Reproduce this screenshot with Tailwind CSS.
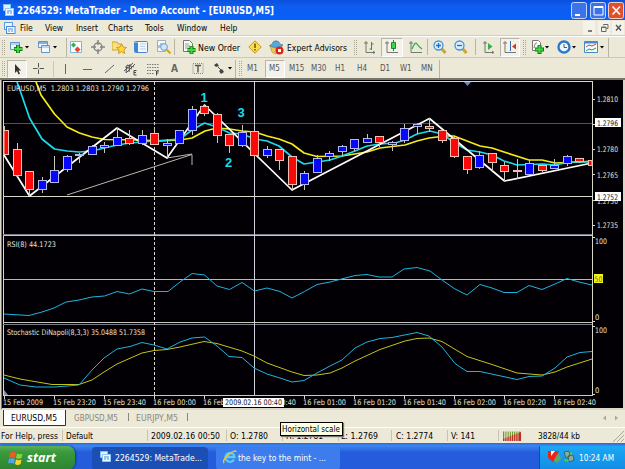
<!DOCTYPE html>
<html lang="en">
<head>
    <meta charset="UTF-8">
    <meta name="viewport" content="width=device-width, initial-scale=1.0">
    <title>MetaTrader</title>
    <script src="https://cdn.jsdelivr.net/npm/@tailwindcss/browser@4"></script>
</head>
<body class="w-[625px] h-[469px] overflow-hidden bg-[#ece9d8] font-['DejaVu_Sans_Condensed','DejaVu_Sans',sans-serif] text-[8px] leading-none text-black whitespace-nowrap">
<div class="flex flex-col w-[625px] h-[469px] overflow-hidden">

    <!-- Title bar -->
    <header class="flex items-center h-5 shrink-0 bg-linear-to-b from-[#0a50dc] via-[#0f5cf0] via-30% to-[#0560f8] text-white">
        <svg class="ml-[3px] w-[11px] h-[12px]" viewBox="0 0 11 12"><rect x=".5" y=".5" width="7" height="6" fill="#dff3ff" stroke="#7fc0f0"/><rect x="2.5" y="4.500" width="8" height="7" fill="#f4fbff" stroke="#8cc8f4"/><path d="M4 7h5M4 9h2M7 9h2" stroke="#3a8cd8"/></svg>
        <svg class="ml-[3px]" width="264" height="20"><text x="0" y="14" font-size="10" font-weight="bold" fill="#fff" textLength="257" lengthAdjust="spacingAndGlyphs">2264529: MetaTrader - Demo Account - [EURUSD,M5]</text></svg>
        <div class="ml-auto mr-[1px] flex gap-[2.5px]">
            <svg width="16" height="17"><rect x=".5" y=".5" width="15" height="16" rx="2" fill="#3c72ea" stroke="#c4d6fb"/><path d="M4 13h5" stroke="#fff" stroke-width="2"/></svg>
            <svg width="16" height="17"><rect x=".5" y=".5" width="15" height="16" rx="2" fill="#3c72ea" stroke="#c4d6fb"/><path d="M4 4.500h9v8.500H4zM4 5.500h9" fill="none" stroke="#fff"/></svg>
            <svg width="16" height="17"><rect x=".5" y=".5" width="15" height="16" rx="2" fill="#e0502c" stroke="#f4d0c4"/><path d="M4.500 4.500l7.500 8M12 4.500l-7.500 8" stroke="#fff" stroke-width="1.700"/></svg>
        </div>
    </header>

    <!-- Menu -->
    <nav class="flex items-center h-4 shrink-0 text-[8.500px] pt-px border-b border-[#d2cfbe]">
        <svg class="ml-1 w-[12px] h-[12px]" viewBox="0 0 12 12"><rect x=".5" y=".5" width="8" height="7" fill="#eaf5ff" stroke="#5b9ae0"/><rect x="2.500" y="4.500" width="8.500" height="7" fill="#f4fbff" stroke="#4a8ad8"/><path d="M4 7h5M4 9h2M7 9h2" stroke="#4a8ad8"/></svg>
        <span class="ml-1 w-[25px]">File</span>
        <span class="w-[31px]">View</span>
        <span class="w-[32px]">Insert</span>
        <span class="w-[37px]">Charts</span>
        <span class="w-[32px]">Tools</span>
        <span class="w-[43px]">Window</span>
        <span>Help</span>
        <svg class="ml-auto mr-[1px]" width="41" height="14"><path d="M0 0h12v14H0zM15 0h12v14H15zM29 0h12v14H29z" fill="#f5f3e9"/><path d="M5 10h4" stroke="#555" stroke-width="1.500"/><path d="M20.500 4.500V3.500h4.500v4h-1.500M18.500 6h4.500v4.500h-4.500zM18.500 6.500H23" fill="none" stroke="#666"/><path d="M33 4l5 5.500M38 4l-5 5.500" stroke="#555" stroke-width="1.400"/></svg>
    </nav>

    <!-- Standard toolbar -->
    <section class="flex items-center h-[22px] shrink-0 border-t border-white border-b border-b-[#cbc8b8] text-[8.500px]">
        <div class="ml-[2px] w-[3px] h-[15px] border-l border-r border-dotted border-[#aaa797]"></div>
        <svg class="ml-1" width="20" height="14"><path d="M1.500 2.500h9v7h-9z" fill="#eef6ff" stroke="#5f94cc"/><path d="M2 4h8" stroke="#7fb0e0"/><path d="M9 5v8M5 9h8.500" stroke="#167a1c" stroke-width="4"/><path d="M9 5.500v7M5.500 9H13" stroke="#3ddb3c" stroke-width="2"/><path d="M16 6h4l-2 2.500z"/></svg>
        <svg class="ml-[8px]" width="20" height="14"><path d="M1.500 1.500h9v6h-9z" fill="#eef6ff" stroke="#5f94cc"/><path d="M2 3h8" stroke="#7fb0e0" stroke-width="2"/><path d="M4.500 5.500h8v7h-8z" fill="#f5faff" stroke="#5f94cc"/><path d="M5 7h8" stroke="#7fb0e0"/><path d="M16 6h4l-2 2.500z"/></svg>
        <div class="ml-[9px] flex h-[19px] w-[19px] items-center justify-center border-l border-[#b8b5a5]"><svg width="14" height="14"><path d="M1.500 1.500h11v11h-11z" fill="#fff" stroke="#7fb4dc"/><path d="M4.500 2.500l2.500 2.500-2.500 2.500L2 5z" fill="#2bb34b"/><path d="M8.500 6.500l3 3-3 3-3-3z" fill="#e8452c"/></svg></div>
        <svg class="ml-[6px]" width="14" height="14"><circle cx="7" cy="7" r="4" fill="none" stroke="#858585" stroke-width="1.500"/><path d="M7 0v5M7 9v5M0 7h5M9 7h5" stroke="#858585" stroke-width="1.500"/></svg>
        <svg class="ml-[7px]" width="15" height="14"><path d="M0 2h5l1 2h4v6H0z" fill="#f8e27b" stroke="#c9a43a"/><path d="M9.500 4l1.600 3 3.400.5-2.500 2.300.7 3.700-3.200-1.800-3 1.800.6-3.700L4.500 7.500 8 7z" fill="#ffd83c" stroke="#d88e1c" stroke-width=".9"/></svg>
        <svg class="ml-[7px]" width="14" height="14"><rect x=".5" y="1.500" width="13" height="11" rx="1" fill="#f2f8ff" stroke="#4688cc"/><path d="M1 2.500h3v9.500H1z" fill="#3e86d4"/><path d="M6 4h6M6 6.500h5M6 9h6" stroke="#b9cfe8"/></svg>
        <svg class="ml-[8px]" width="15" height="14"><path d="M1.500.5h8v11h-8z" fill="#f6f8fa" stroke="#9bb0c4"/><path d="M3 8V5M5 7V3M7 6V3" stroke="#668cae"/><circle cx="8" cy="7" r="3.400" fill="#cde6f8" stroke="#6f9fc8"/><path d="M10.500 9.500l4 4" stroke="#d9a020" stroke-width="2"/></svg>
        <div class="ml-[3px] w-px h-4 bg-[#b8b5a5]"></div>
        <svg class="ml-[7px]" width="15" height="15"><path d="M1.500.5h6l3 3v8h-9z" fill="#fbfbf7" stroke="#777"/><path d="M3 4h4M3 6h5M3 8h4" stroke="#999"/><path d="M9.500 6v8M5.500 10h8" stroke="#167a1c" stroke-width="4"/><path d="M9.500 6.500v7M6 10h7" stroke="#3ddb3c" stroke-width="2"/></svg>
        <svg width="45" height="14"><text x="1" y="10.500" font-size="9" textLength="42" lengthAdjust="spacingAndGlyphs">New Order</text></svg>
        <svg class="ml-[6px]" width="14" height="14"><path d="M7 .8L13.200 7 7 13.200.8 7z" fill="#ffdc48" stroke="#c29a22"/><path d="M7 3.500v4.500M7 9v1.500" stroke="#6a5212" stroke-width="1.500"/></svg>
        <svg class="ml-[7px]" width="15" height="15"><path d="M1 6q6 4 12 0l-2 6-5 2-3-2z" fill="#efc758" stroke="#b98f2c" stroke-width=".7"/><path d="M.5 5.500Q4 4.500 4 2q3-2.500 6 0 0 2.500 4 3-6 4.500-13.500.5z" fill="#58a8dc" stroke="#327cae" stroke-width=".7"/><circle cx="10.500" cy="10.500" r="4" fill="#dc2418"/><path d="M9 9h3v3H9z" fill="#fff"/></svg>
        <svg class="ml-[2px]" width="65" height="14"><text x="1" y="10.500" font-size="9" textLength="60" lengthAdjust="spacingAndGlyphs">Expert Advisors</text></svg>
        <div class="ml-[3px] w-[3px] h-[15px] border-l border-r border-dotted border-[#aaa797]"></div>
        <svg class="ml-[7px]" width="12" height="14"><path d="M2 1v11.500H11M0 3h4M9 11l2 1.500-2 1" fill="none" stroke="#777"/><path d="M7.500 2v8M5.500 9h2M7.500 4h2" stroke="#2a9a3a" fill="none"/></svg>
        <div class="ml-[5px] flex h-[19px] w-[22px] items-center justify-center border border-[#b8b5a5] border-r-white border-b-white bg-[#f4f2e8]"><svg width="14" height="14"><path d="M2 1v11.500H13M0 3h4" fill="none" stroke="#777"/><path d="M8.500 0v11" stroke="#148a28"/><path d="M6.500 2.500h4v6h-4z" fill="#36d84c" stroke="#148a28"/></svg></div>
        <svg class="ml-[6px]" width="14" height="14"><path d="M2 1v11.500H13M0 3h4" fill="none" stroke="#777"/><path d="M3 9Q6 1 8 4t5 5" fill="none" stroke="#35ab48" stroke-width="1.300"/></svg>
        <div class="ml-[4px] w-px h-4 bg-[#b8b5a5]"></div>
        <svg class="ml-[5px]" width="15" height="15"><path d="M8 8l4.500 5" stroke="#d2a42c" stroke-width="3"/><circle cx="5.500" cy="5.500" r="4.500" fill="#d9efff" stroke="#4a94d4" stroke-width="1.300"/><path d="M3 5.500h5M5.500 3v5" stroke="#2a6cb4" stroke-width="1.300"/></svg>
        <svg class="ml-[6px]" width="15" height="15"><path d="M8 8l4.500 5" stroke="#d2a42c" stroke-width="3"/><circle cx="5.500" cy="5.500" r="4.500" fill="#d9efff" stroke="#4a94d4" stroke-width="1.300"/><path d="M3 5.500h5" stroke="#2a6cb4" stroke-width="1.300"/></svg>
        <div class="ml-[6px] w-px h-4 bg-[#b8b5a5]"></div>
        <svg class="ml-[7px]" width="12" height="14"><path d="M2 1v11.500H11M0 3h4M9 11l2 1.500-2 1" fill="none" stroke="#777"/><path d="M5 3l4.500 3.500L5 10z" fill="#32b148"/></svg>
        <div class="ml-[5px] flex h-[19px] w-[20px] items-center justify-center border border-[#b8b5a5] border-r-white border-b-white bg-[#f4f2e8]"><svg width="14" height="14"><path d="M2 1v11.500H13M0 3h4" fill="none" stroke="#777"/><path d="M7.500 1v10" stroke="#346cb4"/><path d="M13 3.500L9 6.500l4 3z" fill="#d83624"/></svg></div>
        <div class="ml-[3px] w-[3px] h-[15px] border-l border-r border-dotted border-[#aaa797]"></div>
        <svg class="ml-[4px]" width="20" height="14"><path d="M2.500.5h6l2 2v8h-8z" fill="#fbfbf7" stroke="#777"/><path d="M4 8q1-6 3-5" fill="none" stroke="#777"/><path d="M9.500 5v9M5 9.500h9" stroke="#167a1c" stroke-width="4"/><path d="M9.500 5.500V13M5.500 9.500H13" stroke="#3ddb3c" stroke-width="2"/><path d="M15 6h4l-2 2.500z"/></svg>
        <svg class="ml-[7px]" width="20" height="14"><circle cx="7" cy="7" r="5.500" fill="#f0f8ff" stroke="#2e78cc" stroke-width="2.400"/><path d="M7 4v3.500h3" fill="none" stroke="#555"/><path d="M15 6h4l-2 2.500z"/></svg>
        <svg class="ml-[7px]" width="20" height="14"><path d="M.5 1.500h13v11H.5z" fill="#f5faff" stroke="#4a88cc"/><path d="M1 2.500h12" stroke="#4a88cc" stroke-width="2"/><path d="M2 7l3-2 3 1 4-2" fill="none" stroke="#b44"/><path d="M2 11l3-2 3 1 4-2" fill="none" stroke="#2a9a3a"/><path d="M16 6h4l-2 2.500z"/></svg>
        <div class="ml-[4px] w-px h-[19px] bg-[#b8b5a5]"></div>
    </section>

    <!-- Line studies and periods -->
    <section class="flex items-center h-5 shrink-0 pt-px text-[#555]">
        <div class="ml-[2px] w-[3px] h-[15px] border-l border-r border-dotted border-[#aaa797]"></div>
        <div class="ml-[2px] flex h-[18px] w-[20px] items-center justify-center border border-[#b8b5a5] border-r-white border-b-white bg-[#f4f2e8]"><svg width="9" height="12"><path d="M2 1v9l2-2 1.500 3.500 1.500-.7L5.500 7.500H8z" fill="#333"/></svg></div>
        <svg class="ml-[5px]" width="13" height="13"><path d="M6.500 1v4.500M6.500 7.500V12M1 6.500h4.500M7.500 6.500H12" stroke="#555"/></svg>
        <div class="ml-[8px] w-px h-4 bg-[#cbc8b8]"></div>
        <svg class="ml-[10px]" width="3" height="12"><path d="M1.500 1v10" stroke="#666"/></svg>
        <svg class="ml-[15px]" width="12" height="12"><path d="M1 6.500h9" stroke="#666"/></svg>
        <svg class="ml-[10px]" width="12" height="12"><path d="M1 10l9-8" stroke="#666"/></svg>
        <svg class="ml-[8px]" width="14" height="14"><path d="M0 9L9 1M2 11l9-9M1 5l7 2M3 3l7 2M2 11l1-8M5 10l1-8" stroke="#555" fill="none"/><path d="M12.500 8.500H10v4.500h2.500M10 10.500h2" stroke="#444" fill="none"/></svg>
        <svg class="ml-[9px]" width="14" height="14"><path d="M0 2.500h12M0 5.500h12M0 8.500h12M0 11.500h7" stroke="#777" stroke-dasharray="1.500 1"/><path d="M9.500 13.500v-4.500H12M9.500 11h2" stroke="#444" fill="none"/></svg>
        <span class="ml-[10px] w-[18px] text-[10px] font-bold text-[#666]">A</span>
        <svg class="ml-[3px]" width="12" height="13"><path d="M1 1.500h10v10H1z" fill="none" stroke="#888" stroke-dasharray="1 1"/><path d="M3 3.500h6M6 3.500v7" stroke="#555" stroke-width="1.400"/></svg>
        <svg class="ml-[9px]" width="20" height="13"><path d="M1 3l3-2 2 3-3 1zM6 9l3-2 2 3-3 2z" fill="#444"/><path d="M5 5l3 3" stroke="#444"/><path d="M15 5h4l-2 2.500z" fill="#000"/></svg>
        <div class="ml-[2px] w-px h-[18px] bg-[#b8b5a5]"></div>
        <div class="ml-[3px] w-[3px] h-[15px] border-l border-r border-dotted border-[#aaa797]"></div>
        <span class="ml-[5px] w-[18px]">M1</span>
        <span class="w-[20px] h-[18px] pl-[3px] pt-[4px] border border-[#b8b5a5] border-r-white border-b-white bg-[#f4f2e8]">M5</span>
        <span class="ml-[4px] w-[22px]">M15</span>
        <span class="w-[24px]">M30</span>
        <span class="w-[22px]">H1</span>
        <span class="w-[23px]">H4</span>
        <span class="w-[20px]">D1</span>
        <span class="w-[21px]">W1</span>
        <span class="w-[18px]">MN</span>
        <div class="w-px h-[18px] bg-[#b8b5a5]"></div>
    </section>

    <!-- Chart window -->
    <main class="h-[332px] shrink-0">
        <svg id="chart" class="block" width="625" height="332" viewBox="0 78 625 332" font-size="7.600">
            <rect x="0" y="78" width="625" height="332" fill="#dbd8c8"/>
            <path d="M0 79h625" stroke="#77776c" stroke-width="2"/>
            <path d="M1.500 80v329" stroke="#77776c"/>
            <rect x="2" y="80" width="621" height="328" fill="#020004"/>
            <g fill="none" shape-rendering="crispEdges">
                <path d="M3.500 395.500V81.500H592.500V395.500" stroke="#d8d8c8"/>
                <path d="M4 123.500H592" stroke="#55554f"/>
                <path d="M3 196.500H592" stroke="#d8d8c8"/>
                <path d="M3 235.500H592M3 322.500H592M3 395.500H593" stroke="#c9c9bd"/>
                <path d="M3 234.500H592M3 324.500H592" stroke="#77808c"/>
                <path d="M4 279.500H592" stroke="#cccc10"/>
                <path d="M154.500 82V395" stroke="#d8d8d0" stroke-dasharray="3 2"/>
                <path d="M254.500 82V395" stroke="#d0d0dc"/>
                <path d="M592 99.500h3M592 124.500h3M592 149.500h3M592 174.500h3M592 200.500h3M592 225.500h3M592 237.500h3M592 321.500h3M592 326.500h3M592 394.500h3" stroke="#d8d8c8"/>
                <path d="M4.500 396v3M54.500 396v3M104.500 396v3M154.500 396v3M204.500 396v3M304.500 396v3M354.500 396v3M404.500 396v3M454.500 396v3M504.500 396v3M554.500 396v3" stroke="#d8d8c8"/>
            </g>
            <path d="M464 82h7l-3.500 4z" fill="#6a88b0"/>
            <path d="M4 390l4 5H4z" fill="#8494a8"/>
            <g fill="none" stroke="#b8b8ac">
                <path d="M67 195L192 154.500V165M167 158L192 154"/>
            </g>
            <g fill="none" stroke-width="1.700" stroke-linejoin="round">
                <path stroke="#f4ec18" d="M36 82L41 95 54.500 114 67 127 79.500 133 92 137 104.500 139.500 142 140 160 141 180 140 192 138 205 131 217 128 229.500 129 242 131 255 132 267 136 279 139 292 144 304 153 317 156.500 342 156 367 152 380 148 405 145 417 141 429 138 445 136 454 136 467 141 480 146 492 148 504 152 529 160 542 160 555 163 580 162 592 161"/>
                <path stroke="#18dcec" d="M17 82L22 96 29.500 118 42 139 54.500 149 67 151 79.500 152 92 151 104.500 148 117 145 130 143 154 141 167 140 180 139 192 130 204.500 123 217 127 229.500 133 242 134 255 139 267 141 279 146 292 157 304 164 317 162 330 160 342 156 355 151 367 146 380 144 395 143 405 140 417 134 430 131 442 134 455 143 467 150 480 152 492 155 504 161 517 165 542 164 555 165 570 162 592 162"/>
                <path stroke="#fff" d="M4 155L29.500 196 117 128 167 158 204.500 105 292 190 429.500 118.500 504.500 181 592 163"/>
            </g>
            <g id="candles"></g>
            <g fill="none" stroke="#1fb4dc">
                <path d="M4 314L29 315.500 42 312 54 308 66 302 79 300 92 297 104.500 296 117 291.500 129.500 294 142 289 154 291.500 168 291.500 180 282 192 273.500 204.500 275 217 286 229.500 289.500 242 282.500 254.500 291 267 288 280 291.500 292 298 304.500 291.500 317 284.500 330 282 355 275.500 367 274.500 379 277 392 277 404 269 417 267.500 430 271 442 280 455 289 467 295 480 284.500 492 288 504 292.500 517 292.500 529 285.500 542 289.500 555 284 567 278.500 579 282 592 285"/>
                <path stroke="#c4c418" d="M4 375L20 379 52 384.500 79 384.500 92 380 104 372 117 364 142 353 154 350.500 167 349.500 180 347 204 341.500 217 343.500 242 351 254 356 267 363 292 372 304 375.500 317 375 330 373 342 368 355 361 380 349.500 405 341 417 338.500 429 338 442 341.500 467 356.500 492 364.500 517 373 542 375 555 372 567 367 592 359"/>
                <path d="M4 378L20 385 36 387 55 387 79 385 92 370 104 358 117 349 130 346.500 142 342.500 154 345 167 349 180 342 192 338 204.500 337 217 346 229 356.500 242 357.500 254 368 267 374 280 378 292 382 304 380.500 317 373 330 366 342 360 355 348 367 342 380 338.500 392 337.500 417 332.500 429 336 442 347 455 363.500 467 371.500 480 371.500 517 379.500 529 376.500 542 376 555 368 567 357 580 352.500 592 351.500"/>
            </g>
            <g fill="#18dcec" font-family="Liberation Sans" font-size="13" font-weight="bold">
                <text x="200.500" y="102">1</text>
                <text x="225" y="167">2</text>
                <text x="237.500" y="117">3</text>
            </g>
            <g fill="#e4e4dc">
                <text x="7" y="91" textLength="142" lengthAdjust="spacingAndGlyphs" xml:space="preserve">EURUSD,M5  1.2803 1.2803 1.2790 1.2796</text>
                <text x="7" y="246.500" textLength="49" lengthAdjust="spacingAndGlyphs">RSI(8) 44.1723</text>
                <text x="7" y="334.500" textLength="138" lengthAdjust="spacingAndGlyphs">Stochastic DiNapoli(8,3,3) 35.0488 51.7358</text>
                <text x="597" y="102" textLength="21" lengthAdjust="spacingAndGlyphs">1.2810</text>
                <text x="597" y="152" textLength="21" lengthAdjust="spacingAndGlyphs">1.2780</text>
                <text x="597" y="177.500" textLength="21" lengthAdjust="spacingAndGlyphs">1.2765</text>
                <text x="597" y="203.500" textLength="21" lengthAdjust="spacingAndGlyphs">1.2750</text>
                <text x="597" y="228" textLength="21" lengthAdjust="spacingAndGlyphs">1.2735</text>
                <text x="595" y="244" textLength="12" lengthAdjust="spacingAndGlyphs">100</text>
                <text x="595" y="320">0</text>
                <text x="595" y="332.500" textLength="12" lengthAdjust="spacingAndGlyphs">100</text>
                <text x="595" y="392.500">0</text>
                <text x="3" y="404.500" textLength="40" lengthAdjust="spacingAndGlyphs">15 Feb 2009</text>
                <text x="53" y="404.500" textLength="43" lengthAdjust="spacingAndGlyphs">15 Feb 23:20</text>
                <text x="103" y="404.500" textLength="43" lengthAdjust="spacingAndGlyphs">15 Feb 23:40</text>
                <text x="153" y="404.500" textLength="43" lengthAdjust="spacingAndGlyphs">16 Feb 00:00</text>
                <text x="203" y="404.500" textLength="43" lengthAdjust="spacingAndGlyphs">16 Feb 00:20</text>
                <text x="253" y="404.500" textLength="43" lengthAdjust="spacingAndGlyphs">16 Feb 00:40</text>
                <text x="303" y="404.500" textLength="43" lengthAdjust="spacingAndGlyphs">16 Feb 01:00</text>
                <text x="353" y="404.500" textLength="43" lengthAdjust="spacingAndGlyphs">16 Feb 01:20</text>
                <text x="403" y="404.500" textLength="43" lengthAdjust="spacingAndGlyphs">16 Feb 01:40</text>
                <text x="453" y="404.500" textLength="43" lengthAdjust="spacingAndGlyphs">16 Feb 02:00</text>
                <text x="503" y="404.500" textLength="43" lengthAdjust="spacingAndGlyphs">16 Feb 02:20</text>
                <text x="553" y="404.500" textLength="43" lengthAdjust="spacingAndGlyphs">16 Feb 02:40</text>
            </g>
            <!-- Price, level and time markers -->
            <path d="M595 118h26v9h-26zM595 192h26v9h-26zM223 398h61v9h-61z" fill="#fff"/>
            <path d="M594 274h9v9h-9z" fill="#f4f418"/>
            <g fill="#111">
                <text x="597" y="125.500" textLength="21" lengthAdjust="spacingAndGlyphs">1.2796</text>
                <text x="597" y="199.500" textLength="21" lengthAdjust="spacingAndGlyphs">1.2752</text>
                <text x="225" y="405" textLength="57" lengthAdjust="spacingAndGlyphs">2009.02.16 00:40</text>
                <text x="594.500" y="281.500" fill="#77770c" textLength="8" lengthAdjust="spacingAndGlyphs">50</text>
            </g>
        </svg>
    </main>

    <!-- Chart tabs -->
    <nav class="flex items-start h-[17px] shrink-0 text-[#8a8778]">
        <svg class="ml-[2px]" width="190" height="17"><path d="M1 0h62v15H1z" fill="#fff"/><path d="M1.500 0v15.500H63.500V0" fill="none" stroke="#333"/><g font-size="9"><text x="9" y="10.500" fill="#000" textLength="46" lengthAdjust="spacingAndGlyphs">EURUSD,M5</text><text x="72" y="10.500" fill="#8a8778" textLength="44" lengthAdjust="spacingAndGlyphs">GBPUSD,M5</text><text x="134" y="10.500" fill="#8a8778" textLength="42" lengthAdjust="spacingAndGlyphs">EURJPY,M5</text></g><path d="M126.500 3v8M185.500 3v8" stroke="#8a8778"/></svg>
        <svg class="ml-auto mr-1" width="20" height="16"><path d="M5 5.500L2 8l3 2.500zM14 5.500L17 8l-3 2.500z" fill="#aaa797"/></svg>
    </nav>

    <!-- Status bar -->
    <footer class="relative h-[16px] shrink-0 border-t border-white">
        <svg class="block" width="625" height="15" font-size="9">
            <path d="M62.500 2v11M147.500 2v11M226.500 2v11M282.500 2v11M338.500 2v11M391.500 2v11M447.500 2v11M498.500 2v11" stroke="#c6c3b2"/>
            <text x="1" y="11" textLength="57" lengthAdjust="spacingAndGlyphs">For Help, press</text>
            <text x="66" y="11" textLength="27" lengthAdjust="spacingAndGlyphs">Default</text>
            <text x="151" y="11" textLength="69" lengthAdjust="spacingAndGlyphs">2009.02.16 00:50</text>
            <text x="230" y="11" textLength="38" lengthAdjust="spacingAndGlyphs">O: 1.2780</text>
            <text x="286" y="11" textLength="37" lengthAdjust="spacingAndGlyphs">H: 1.2781</text>
            <text x="341" y="11" textLength="37" lengthAdjust="spacingAndGlyphs">L: 1.2769</text>
            <text x="396" y="11" textLength="37" lengthAdjust="spacingAndGlyphs">C: 1.2774</text>
            <text x="451" y="11" textLength="24" lengthAdjust="spacingAndGlyphs">V: 141</text>
            <path d="M503 8h18" stroke="#6d9a30" stroke-width="9" stroke-dasharray="1.500 .7"/>
            <path d="M503 13v-2l18-7v9z" fill="#b83020"/>
            <path d="M504.800 3v10M507 3v10M509.200 3v10M511.400 3v10M513.600 3v10M515.800 3v10M518 3v10" stroke="#ece9d8" stroke-width=".7"/>
            <text x="538" y="11" textLength="42" lengthAdjust="spacingAndGlyphs">3828/44 kb</text>
            <path d="M613 14l11-11M617 14l7-7M621 14l3-3" stroke="#aaa797"/>
        </svg>
        <!-- Tooltip -->
        <div class="absolute left-[280px] -top-[6px] w-[63px] h-[14px] bg-[#ffffe1] border border-black shadow-[1px_1px_1px_#777]">
            <svg class="block" width="61" height="12"><text x="1" y="9" font-size="9" textLength="58" lengthAdjust="spacingAndGlyphs">Horizontal scale</text></svg>
        </div>
    </footer>

    <!-- Taskbar -->
    <footer class="flex items-end h-[27px] shrink-0 bg-linear-to-b from-[#2c66d8] via-[#3c86f0] via-10% to-[#245cdc] to-35% text-white">
        <div class="flex items-center w-[75px] h-[24px] pl-2 rounded-r-lg bg-linear-to-b from-[#5cb058] via-[#3a9a3c] via-25% to-[#2c8430] shadow-[1px_0_2px_#123c8c]">
            <svg width="15" height="15"><path d="M2 2q3-2 6 0L7 7Q4 5.500 1 7z" fill="#f05a28"/><path d="M9 2.500q3 1.500 5.500 0L13.500 7q-3 1.500-5.500 0z" fill="#8cd03c"/><path d="M1 8q3-1.500 6 0l-1 5q-3-2-6-.5z" fill="#58a0f4"/><path d="M8 8.500q3 1.500 5.500 0l-1 4.500q-3 2-5.500 0z" fill="#ffd52c"/></svg>
            <svg class="ml-[3px]" width="33" height="22"><text x="1" y="15" font-family="Open Sans" font-size="13" font-weight="bold" font-style="italic" fill="#fff" textLength="29" lengthAdjust="spacingAndGlyphs">start</text></svg>
        </div>
        <div class="flex items-center ml-[17px] w-[116px] h-[23px] pb-1 pl-2 rounded-sm bg-[#1c4fb4]">
            <svg width="11" height="13"><path d="M.5 1.500h7v6h-7z" fill="#dff3ff" stroke="#7fc0f0"/><path d="M2.500 4.500h8v7h-8z" fill="#f4fbff" stroke="#8cc8f4"/><path d="M4 7h5M4 9h2M7 9h2" stroke="#3a8cd8"/></svg>
            <svg class="ml-[4px]" width="92" height="14"><text x="0" y="10.500" font-size="9" fill="#fff" textLength="87" lengthAdjust="spacingAndGlyphs">2264529: MetaTrade...</text></svg>
        </div>
        <div class="flex items-center ml-[8px] w-[124px] h-[23px] pb-1 pl-[7px] rounded-sm bg-[#3c7cec]">
            <svg width="14" height="14"><path d="M11 9.500A4.500 4.500 0 1 1 11.500 7H4" fill="none" stroke="#58ccf8" stroke-width="2.300"/><path d="M1 13Q-1 10 6 4.500T13 2" fill="none" stroke="#f8c82c" stroke-width="1.400"/></svg>
            <svg class="ml-px" width="94" height="14"><text x="0" y="10.500" font-size="9" fill="#fff" textLength="88" lengthAdjust="spacingAndGlyphs">the key to the mint - ...</text></svg>
        </div>
        <div class="flex items-center ml-auto w-[86px] h-[24px] pb-[3px] pl-[8px] border-l border-[#0c4cac] bg-linear-to-b from-[#1ca8f4] to-[#128ce4]">
            <svg width="13" height="13"><path d="M7 5l4-1 2 5-4 4-4-3z" fill="#5ca86c"/><path d="M0 1h3v4l4-4h4L5 12 0 8z" fill="#ec2418"/><path d="M3 1v5l4-5z" fill="#fff"/></svg>
            <svg class="ml-[2px]" width="12" height="13"><path d="M1 2l5-1 1 5-4 2zM5 6l5-1 1 5-5 2z" fill="#8fa8a0" stroke="#355c50" stroke-width=".8"/><path d="M2 9l4 1-1 2-4-1zM7 2l2 1v2H7z" fill="#50c854"/></svg>
            <svg class="ml-[4px]" width="40" height="14"><text x="0" y="10.500" font-size="9" fill="#fff" textLength="35" lengthAdjust="spacingAndGlyphs">10:24 AM</text></svg>
        </div>
    </footer>
</div>

<script>
    // high, open/close top, open/close bottom, low, direction
    const bars = [
        [126,130,154,154,0],[143,149,175,176,0],[171,171,189,195,0],[177,180,189,192,1],[156,170,182,182,1],
        [155,156,169,171,1],[153,154,155,162,1],[145,146,154,154,1],[142,145,147,152,1],[128,137,145,145,1],
        [130,138,143,144,0],[130,135,143,144,1],[128,133,144,144,0],[139,143,145,158,1],[130,130,143,143,1],
        [106,109,130,134,1],[104,106,113,115,0],[113,114,135,142,0],[134,134,145,152,0],[125,132,145,146,1],
        [131,131,155,155,0],[146,149,155,157,1],[149,149,160,169,0],[156,156,184,190,0],[171,173,184,189,1],
        [155,158,172,172,1],[151,153,156,160,1],[145,146,151,155,1],[139,139,148,150,1],[134,138,142,142,1],
        [136,136,142,146,0],[141,142,144,150,1],[124,128,140,142,1],[123,124,126,133,1],[118,126,128,131,0],
        [130,130,140,142,0],[137,138,156,157,0],[156,156,169,173,0],[151,155,167,168,1],[153,153,162,170,0],
        [162,165,171,181,0],[159,170,171,178,0],[160,163,174,174,1],[165,165,170,171,0],[159,165,168,168,1],
        [155,156,163,165,1],[158,158,161,162,0],[159,160,165,167,0]
    ];
    let out = '';
    bars.forEach(([hi, top, bottom, lo, up], i) => {
        const x = Math.floor(4.5 + 12.5 * i) + 0.5;
        const left = i === 0 ? 4 : x - 4;
        const right = i === 47 ? 592 : x + 4;
        out += `<path d="M${x} ${hi}V${lo + 1}" stroke="#c8c8b8"/>`;
        out += `<rect x="${left}" y="${top + 0.5}" width="${right - left}" height="${bottom - top}" fill="${up ? '#0808f8' : '#fb0808'}" stroke="${up ? '#b4b8f0' : '#f4c0b4'}" stroke-width="1"/>`;
    });
    document.getElementById('candles').innerHTML = out;
</script>
</body>
</html>
